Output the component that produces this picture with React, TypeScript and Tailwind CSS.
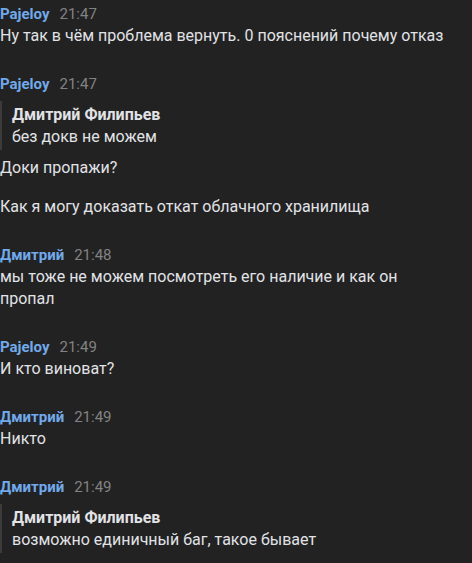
type Quote = { author: string; text: string }

type Msg = {
  name: string
  time: string
  quote?: Quote
  lines: string[]
}

const messages: Msg[] = [
  { name: "Pajeloy", time: "21:47", lines: ["Ну так в чём проблема вернуть. 0 пояснений почему отказ"] },
  {
    name: "Pajeloy",
    time: "21:47",
    quote: { author: "Дмитрий Филипьев", text: "без докв не можем" },
    lines: ["Доки пропажи?", "Как я могу доказать откат облачного хранилища"],
  },
  { name: "Дмитрий", time: "21:48", lines: ["мы тоже не можем посмотреть его наличие и как он пропал"] },
  { name: "Pajeloy", time: "21:49", lines: ["И кто виноват?"] },
  { name: "Дмитрий", time: "21:49", lines: ["Никто"] },
  {
    name: "Дмитрий",
    time: "21:49",
    quote: { author: "Дмитрий Филипьев", text: "возможно единичный баг, такое бывает" },
    lines: [],
  },
]

function Message({ msg }: { msg: Msg }) {
  return (
    <div className="flex flex-col">
      <div className="flex items-baseline gap-[10px] h-5 leading-5">
        <span className="text-[15px] font-bold text-[#71aaeb]">{msg.name}</span>
        <span className="text-[15px] text-[#828282]">{msg.time}</span>
      </div>
      {msg.quote && (
        <div className="mt-[7px] border-l-2 border-[#3b3b3b] pl-[10px] pt-[3px] pb-[2px]">
          <div className="text-[16px] font-bold leading-[22px] text-[#e1e3e6]">{msg.quote.author}</div>
          <div className="text-[16px] leading-[22px] text-[#e1e3e6]">{msg.quote.text}</div>
        </div>
      )}
      {msg.lines.length > 0 && (
        <div className={msg.quote ? "mt-[7px] flex flex-col gap-[17px]" : "mt-[1px] flex flex-col gap-[17px]"}>
          {msg.lines.map((l, i) => (
            <p key={i} className="text-[16px] leading-[22px] text-[#e1e3e6] max-w-[455px]">
              {l}
            </p>
          ))}
        </div>
      )}
    </div>
  )
}

export default function App() {
  return (
    <div className="w-[472px] h-[563px] bg-[#222222] overflow-hidden font-['Roboto',sans-serif] pt-[4px] flex flex-col gap-[27px]">
      {messages.map((m, i) => (
        <Message key={i} msg={m} />
      ))}
    </div>
  )
}
